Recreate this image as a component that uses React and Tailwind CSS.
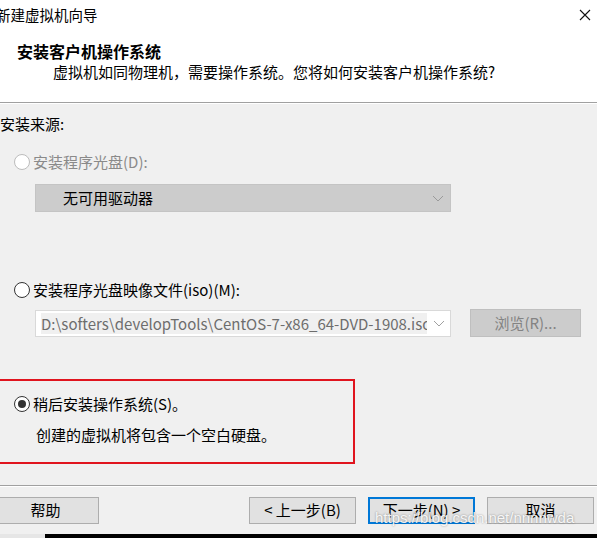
import React from "react";

const FONT = { fontFamily: '"Noto Sans CJK SC", "Noto Sans", sans-serif' };

function Radio({ state }) {
  const border = state === "disabled" ? "border-[#bcbcbc]" : "border-[#333333]";
  return (
    <span
      className={`flex h-[16px] w-[16px] shrink-0 items-center justify-center rounded-full border bg-white ${border}`}
    >
      {state === "on" && <span className="h-[8px] w-[8px] rounded-full bg-[#333333]" />}
    </span>
  );
}

function Chevron({ color = "#a0a0a0" }) {
  return (
    <svg width="12" height="7" viewBox="0 0 12 7" fill="none">
      <path d="M1 1 L6 6 L11 1" stroke={color} strokeWidth="1" />
    </svg>
  );
}

function Button({ children, className = "", focused = false }) {
  return (
    <div
      className={`flex h-[27px] w-[107px] shrink-0 items-center justify-center border bg-[#e1e1e1] text-[15px] text-black ${
        focused ? "border-[#0078d7] border-2" : "border-[#adadad]"
      } ${className}`}
    >
      {children}
    </div>
  );
}

export default function App() {
  return (
    <div
      className="relative flex h-[538px] w-[597px] flex-col overflow-hidden bg-[#f0f0f0] text-black"
      style={FONT}
    >
      {/* Header */}
      <div className="relative flex h-[102px] shrink-0 flex-col bg-white">
        <div className="flex h-[30px] items-center justify-between">
          <span className="-ml-[4px] text-[14.5px] leading-none text-black">新建虚拟机向导</span>
          <svg className="mr-[6px]" width="12" height="12" viewBox="0 0 12 12">
            <path d="M1 1 L11 11 M11 1 L1 11" stroke="#111" strokeWidth="1.1" />
          </svg>
        </div>
        <div className="ml-[17px] mt-[11px] text-[16px] font-bold leading-[20px]">安装客户机操作系统</div>
        <div className="ml-[53px] mt-[1px] text-[15px] leading-[20px]">
          虚拟机如同物理机，需要操作系统。您将如何安装客户机操作系统?
        </div>
      </div>
      <div className="h-px shrink-0 bg-[#a0a0a0]" />
      <div className="h-px shrink-0 bg-white" />

      {/* Body */}
      <div className="flex flex-col">
        <div className="mt-[10px] text-[15px] leading-[20px]">安装来源:</div>

        <div className="ml-[14px] mt-[18px] flex h-[20px] items-center gap-[3px]">
          <Radio state="disabled" />
          <span className="text-[15px] text-[#8a8a8a]">安装程序光盘(D):</span>
        </div>

        <div className="ml-[35px] mt-[12px] flex h-[28px] w-[416px] items-center justify-between border border-[#c4c4c4] bg-[#cccccc] pl-[27px] pr-[6px]">
          <span className="text-[15px] text-black">无可用驱动器</span>
          <Chevron color="#9a9a9a" />
        </div>

        <div className="ml-[14px] mt-[68px] flex h-[20px] items-center gap-[3px]">
          <Radio state="off" />
          <span className="text-[15px] text-black">安装程序光盘映像文件(iso)(M):</span>
        </div>

        <div className="mt-[9px] flex items-center">
          <div className="ml-[35px] flex h-[27px] w-[416px] items-center border border-[#d9d9d9] bg-white">
            <div className="ml-[5px] w-[386px] overflow-hidden whitespace-nowrap bg-[#f0f0f0] text-[15px] leading-[21px] text-[#6d6d6d]">
              D:\softers\developTools\CentOS-7-x86_64-DVD-1908.iso
            </div>
            <div className="flex flex-1 justify-center">
              <Chevron color="#a0a0a0" />
            </div>
          </div>
          <div className="ml-[19px] flex h-[28px] w-[111px] items-center justify-center border border-[#bfbfbf] bg-[#cccccc] text-[15px] text-[#838383]">
            浏览(R)...
          </div>
        </div>

        <div className="-ml-[4px] mt-[42px] flex h-[85px] w-[359px] flex-col border-2 border-[#e0141e] pt-[13px]">
          <div className="ml-[16px] flex h-[20px] items-center gap-[3px]">
            <Radio state="on" />
            <span className="text-[15px] text-black">稍后安装操作系统(S)。</span>
          </div>
          <div className="ml-[38px] mt-[11px] text-[15px] leading-[20px]">创建的虚拟机将包含一个空白硬盘。</div>
        </div>

        <div className="mt-[21px] h-px bg-[#a0a0a0]" />
        <div className="h-px bg-white" />

        <div className="mt-[10px] flex items-center">
          <Button className="-ml-[8px]">帮助</Button>
          <Button className="ml-[150px]">&lt; 上一步(B)</Button>
          <Button className="ml-[12px]" focused>
            下一步(N) &gt;
          </Button>
          <Button className="ml-[12px]">取消</Button>
        </div>

        <div className="mt-[10px] flex h-[6px]">
          <div className="w-[45px] bg-[#e6e6e6]" />
          <div className="flex-1 bg-black" />
        </div>
      </div>

      {/* watermark */}
      <div
        className="pointer-events-none absolute left-[375px] top-[506px] text-[15px] leading-[24px] text-white/90"
        style={{ textShadow: "0 0 2px rgba(0,0,0,0.45)", fontFamily: '"Liberation Sans", sans-serif' }}
      >
        https://blog.csdn.net/nnnnwda
      </div>
    </div>
  );
}
